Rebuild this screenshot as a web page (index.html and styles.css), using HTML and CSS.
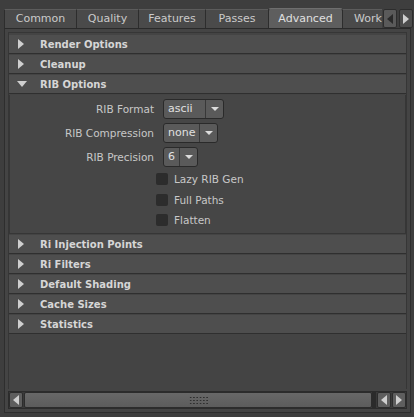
FILE: index.html
```html
<!DOCTYPE html>
<html>
<head>
	<title>Render Settings</title>
	<link rel="stylesheet" href="styles.css">
</head>
<body>
	<div class="tabbar">
		<div class="tabs">
			<div class="tab t-common">Common</div>
			<div class="tab t-quality">Quality</div>
			<div class="tab t-features">Features</div>
			<div class="tab t-passes">Passes</div>
			<div class="tab t-advanced tab-active">Advanced</div>
			<div class="tab tab-clip">Work</div>
		</div>
		<div class="tab-arrow"><span class="tri tri-left dark"></span></div>
		<div class="tab-arrow"><span class="tri tri-right"></span></div>
	</div>

	<div class="panel">
		<div class="scroll">
			<div class="frame"><span class="tri tri-right"></span>Render Options</div>
			<div class="frame"><span class="tri tri-right"></span>Cleanup</div>
			<div class="frame"><span class="tri tri-down"></span>RIB Options</div>
			<div class="frame-body">
				<div class="row">
					<label>RIB Format</label>
					<div class="combo combo-wide"><span class="val">ascii</span><span class="drop"><span class="tri tri-down small"></span></span></div>
				</div>
				<div class="row">
					<label>RIB Compression</label>
					<div class="combo combo-mid"><span class="val">none</span><span class="drop"><span class="tri tri-down small"></span></span></div>
				</div>
				<div class="row">
					<label>RIB Precision</label>
					<div class="combo combo-small"><span class="val">6</span><span class="drop"><span class="tri tri-down small"></span></span></div>
				</div>
				<div class="check first"><span class="box"></span>Lazy RIB Gen</div>
				<div class="check"><span class="box"></span>Full Paths</div>
				<div class="check"><span class="box"></span>Flatten</div>
			</div>
			<div class="frame"><span class="tri tri-right"></span>Ri Injection Points</div>
			<div class="frame"><span class="tri tri-right"></span>Ri Filters</div>
			<div class="frame"><span class="tri tri-right"></span>Default Shading</div>
			<div class="frame"><span class="tri tri-right"></span>Cache Sizes</div>
			<div class="frame"><span class="tri tri-right"></span>Statistics</div>
		</div>
		<div class="hscroll">
			<div class="sbtn"><span class="tri tri-left"></span></div>
			<div class="track"><span class="grip"></span></div>
			<div class="notch"></div>
			<div class="sbtn"><span class="tri tri-left"></span></div>
			<div class="sbtn"><span class="tri tri-right"></span></div>
		</div>
	</div>
</body>
</html>
```

FILE: styles.css
```css
body {
	margin: 0;
	width: 414px;
	height: 417px;
	background-color: #3e3e3e;
	color: #d2d2d2;
	font-family: "DejaVu Sans", sans-serif;
	font-size: 10.5px;
	overflow: hidden;
}

/* triangles used for frames, arrows and combos */
.tri {
	display: inline-block;
	width: 0;
	height: 0;
	border-style: solid;
	border-color: transparent;
}
.tri-right {
	border-width: 5px 0 5px 6px;
	border-left-color: #cfcfcf;
}
.tri-left {
	border-width: 5px 6px 5px 0;
	border-right-color: #cfcfcf;
}
.tri-left.dark {
	border-right-color: #2a2a2a;
}
.tri-down {
	border-width: 6px 5px 0 5px;
	border-top-color: #cfcfcf;
}
.tri-down.small {
	border-width: 4px 4px 0 4px;
	border-top-color: #dcdcdc;
}

/* tab row */
.tabbar {
	display: flex;
	height: 28px;
	padding: 8px 0 0 4px;
	box-sizing: border-box;
}
.tabs {
	display: flex;
	width: 378px;
	overflow: hidden;
	align-items: flex-end;
}
.tab {
	flex: none;
	height: 19px;
	line-height: 18px;
	text-align: center;
	background-color: #4a4a4a;
	border: 1px solid #2d2d2d;
	border-bottom: none;
	border-top-color: #5c5c5c;
	color: #cbcbcb;
	font-size: 11px;
	box-sizing: border-box;
	margin-right: -1px;
}
.t-common { width: 73px; }
.t-quality { width: 63px; }
.t-features { width: 68px; }
.t-passes { width: 64px; }
.t-advanced { width: 75px; }
.tab-active {
	height: 20px;
	line-height: 19px;
	background-color: #5e5e5e;
	border-color: #6e6e6e #2d2d2d #2d2d2d #2d2d2d;
	border-radius: 3px 3px 0 0;
	color: #e0e0e0;
}
.tab-clip {
	width: 50px;
	text-align: left;
	padding-left: 11px;
}
.tab-arrow {
	width: 14px;
	height: 19px;
	margin-top: 1px;
	margin-left: 1px;
	background-color: #5a5a5a;
	border: 1px solid #2d2d2d;
	border-radius: 2px;
	box-sizing: border-box;
	display: flex;
	align-items: center;
	justify-content: center;
}
.tab-arrow + .tab-arrow {
	background-color: #4c4c4c;
	margin-left: 2px;
}

/* main panel */
.panel {
	margin: 0 3px 0 4px;
	height: 385px;
	border: 1px solid #2e2e2e;
	border-top: 1px solid #2a2a2a;
	background-color: #444444;
	box-sizing: border-box;
	padding: 3px 3px 3px 3px;
	display: flex;
	flex-direction: column;
}
.scroll {
	flex: 1;
	border: 1px solid #363636;
	border-bottom: none;
	padding: 2px 0 0 0;
	overflow: hidden;
}
.frame {
	height: 19px;
	margin-bottom: 1px;
	background-color: #4e4e4e;
	border-bottom: 1px solid #2f2f2f;
	box-sizing: border-box;
	display: flex;
	align-items: center;
	font-weight: bold;
	font-size: 10px;
	color: #d6d6d6;
	padding-left: 9px;
}
.frame .tri {
	margin-right: 16px;
}
.frame .tri-down {
	margin-left: -1px;
	margin-right: 13px;
}

/* expanded frame contents */
.frame-body {
	height: 139px;
	box-sizing: border-box;
	border: 1px solid #363636;
	border-top: none;
	background-color: #464646;
	padding-top: 4px;
	margin-bottom: 1px;
}
.row {
	display: flex;
	align-items: center;
	height: 20px;
	margin-bottom: 4px;
}
.row label {
	width: 144px;
	text-align: right;
	padding-right: 9px;
	color: #c8c8c8;
}
.combo {
	display: flex;
	height: 20px;
	box-sizing: border-box;
	border: 1px solid #2a2a2a;
	border-radius: 3px;
	background-color: #5a5a5a;
	color: #e0e0e0;
	font-size: 11px;
}
.combo-wide { width: 61px; }
.combo-mid { width: 55px; }
.combo-small { width: 35px; }
.combo .val {
	flex: 1;
	padding-left: 4px;
	line-height: 18px;
}
.combo .drop {
	width: 17px;
	border-left: 1px solid #383838;
	display: flex;
	align-items: center;
	justify-content: center;
}
.check {
	display: flex;
	align-items: center;
	height: 20.5px;
	margin-left: 146px;
	color: #c8c8c8;
}
.check.first {
	margin-top: -2px;
}
.box {
	width: 12px;
	height: 12px;
	background-color: #2c2c2c;
	border-radius: 2px;
	margin-right: 6px;
}

/* horizontal scrollbar */
.hscroll {
	display: flex;
	height: 16px;
	border: 1px solid #2c2c2c;
	background-color: #3a3a3a;
	margin-top: 2px;
}
.sbtn {
	width: 14px;
	background-color: #5e5e5e;
	border: 1px solid #2c2c2c;
	border-radius: 2px;
	box-sizing: border-box;
	display: flex;
	align-items: center;
	justify-content: center;
}
.track {
	flex: 1;
	margin-left: 1px;
	background: linear-gradient(#686868, #5c5c5c);
	border: 1px solid #2c2c2c;
	border-radius: 2px;
	display: flex;
	align-items: center;
	justify-content: center;
}
.grip {
	width: 19px;
	height: 8px;
	background-image: radial-gradient(circle, #2f2f2f 0.8px, transparent 1px);
	background-size: 3.3px 3px;
}
.notch {
	width: 4px;
	background-image: radial-gradient(circle, #2a2a2a 0.7px, transparent 1px);
	background-size: 2px 2px;
	background-color: #555;
	margin-right: 1px;
}
.notch + .sbtn {
	margin-right: 1px;
}
```
